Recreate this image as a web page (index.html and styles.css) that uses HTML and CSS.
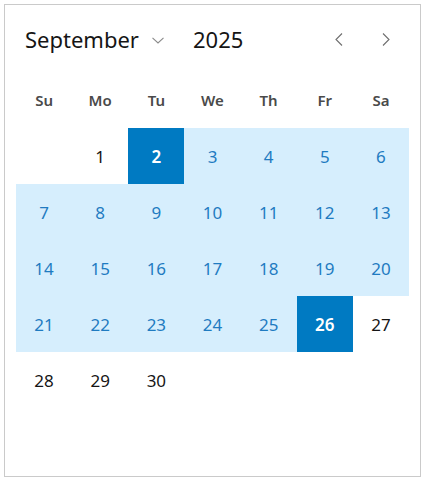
FILE: index.html
```html
<!DOCTYPE html>
<html lang="en">
<head>
<meta charset="utf-8">
<title>Date picker</title>
<link rel="stylesheet" href="styles.css">
</head>
<body>
<div class="cal">
  <div class="header">
    <div class="month">
      <span class="month-name">September</span>
      <svg class="caret" width="12" height="7" viewBox="0 0 12 7"><path d="M0.5 0.8 L6 6 L11.5 0.8" fill="none" stroke="#8a8a8a" stroke-width="1.1"/></svg>
    </div>
    <span class="year">2025</span>
    <div class="nav">
      <button class="navbtn" aria-label="Previous month"><svg width="8" height="13" viewBox="0 0 8 13"><path d="M7 0.5 L1 6.5 L7 12.5" fill="none" stroke="#6e6e6e" stroke-width="1.1"/></svg></button>
      <button class="navbtn" aria-label="Next month"><svg width="8" height="13" viewBox="0 0 8 13"><path d="M1 0.5 L7 6.5 L1 12.5" fill="none" stroke="#6e6e6e" stroke-width="1.1"/></svg></button>
    </div>
  </div>
  <div class="weekdays">
    <span>Su</span><span>Mo</span><span>Tu</span><span>We</span><span>Th</span><span>Fr</span><span>Sa</span>
  </div>
  <div class="days">
    <span class="day empty"></span>
    <span class="day">1</span>
    <span class="day sel">2</span>
    <span class="day range">3</span>
    <span class="day range">4</span>
    <span class="day range">5</span>
    <span class="day range">6</span>
    <span class="day range">7</span>
    <span class="day range">8</span>
    <span class="day range">9</span>
    <span class="day range">10</span>
    <span class="day range">11</span>
    <span class="day range">12</span>
    <span class="day range">13</span>
    <span class="day range">14</span>
    <span class="day range">15</span>
    <span class="day range">16</span>
    <span class="day range">17</span>
    <span class="day range">18</span>
    <span class="day range">19</span>
    <span class="day range">20</span>
    <span class="day range">21</span>
    <span class="day range">22</span>
    <span class="day range">23</span>
    <span class="day range">24</span>
    <span class="day range">25</span>
    <span class="day sel">26</span>
    <span class="day">27</span>
    <span class="day">28</span>
    <span class="day">29</span>
    <span class="day">30</span>
  </div>
</div>
</body>
</html>
```

FILE: styles.css
```css
* { box-sizing: border-box; }
html, body { margin: 0; padding: 0; background: #ffffff; }
body {
  padding: 4px;
  font-family: "Noto Sans", "Liberation Sans", sans-serif;
  color: #151515;
}
.cal {
  width: 417px;
  height: 473px;
  border: 1px solid #cacaca;
  padding: 11px;
  background: #fff;
}
.header {
  height: 46px;
  display: flex;
  align-items: center;
  padding-left: 9px;
}
.month {
  display: flex;
  align-items: center;
  gap: 13px;
}
.month-name {
  font-size: 22px;
  line-height: 1;
  color: #151515;
}
.caret { display: block; margin-top: 3px; }
.year {
  margin-left: 29px;
  font-size: 22px;
  line-height: 1;
  color: #151515;
}
.nav {
  margin-left: auto;
  display: flex;
}
.navbtn {
  width: 47px;
  height: 46px;
  border: 0;
  background: none;
  padding: 0;
  display: flex;
  align-items: center;
  justify-content: center;
}
.navbtn svg { display: block; }
.weekdays {
  margin-top: 10px;
  height: 56px;
  display: grid;
  grid-template-columns: repeat(7, 1fr);
  align-items: center;
  text-align: center;
  font-size: 15px;
  font-weight: 600;
  color: #4a4a4a;
}
.days {
  display: grid;
  grid-template-columns: repeat(7, 1fr);
  grid-auto-rows: 56px;
}
.day {
  display: flex;
  align-items: center;
  justify-content: center;
  font-size: 17px;
  color: #151515;
}
.range {
  background: #d6eefd;
  color: #1f7bc1;
}
.sel {
  background: #007ac2;
  color: #ffffff;
  font-weight: 600;
}
```
